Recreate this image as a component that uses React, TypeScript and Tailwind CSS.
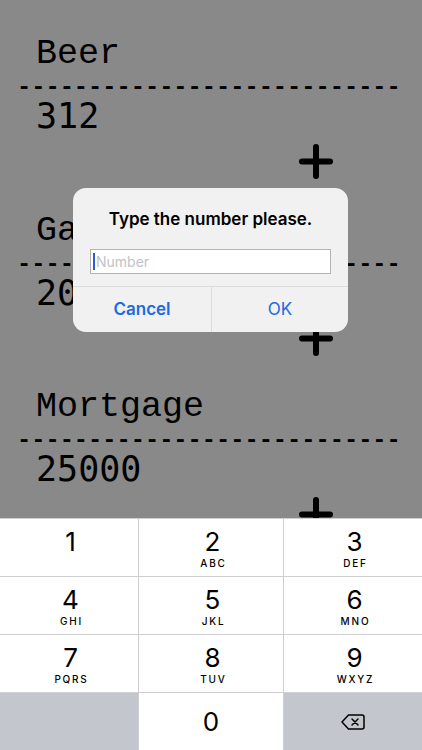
import React from 'react';

const ITEMS = [
  { name: 'Beer', amount: '312' },
  { name: 'Gas', amount: '200' },
  { name: 'Mortgage', amount: '25000' },
];

const KEYS = [
  { digit: '1', letters: '' },
  { digit: '2', letters: 'ABC' },
  { digit: '3', letters: 'DEF' },
  { digit: '4', letters: 'GHI' },
  { digit: '5', letters: 'JKL' },
  { digit: '6', letters: 'MNO' },
  { digit: '7', letters: 'PQRS' },
  { digit: '8', letters: 'TUV' },
  { digit: '9', letters: 'WXYZ' },
];

const PlusIcon = () => (
  <svg width="34" height="35" viewBox="0 0 34 35" fill="none">
    <line x1="17" y1="3" x2="17" y2="32" stroke="black" strokeWidth="6" strokeLinecap="round" />
    <line x1="3" y1="17.5" x2="31" y2="17.5" stroke="black" strokeWidth="6" strokeLinecap="round" />
  </svg>
);

const BackspaceIcon = () => (
  <svg width="24" height="16" viewBox="0 0 24 16" fill="none">
    <path
      d="M7.5 1h13.5a2 2 0 0 1 2 2v10a2 2 0 0 1-2 2H7.5L1 8z"
      stroke="black"
      strokeWidth="1.5"
      strokeLinejoin="round"
    />
    <path d="M11 5l6 6M17 5l-6 6" stroke="black" strokeWidth="1.5" strokeLinecap="round" />
  </svg>
);

const ExpenseItem: React.FC<{ name: string; amount: string }> = ({ name, amount }) => (
  <div className="flex flex-col h-[176.5px]">
    <div className="pl-[36px] h-[37px] pt-[1px] text-[35px] leading-[37px] font-['Liberation_Mono',monospace]">{name}</div>
    <div className="mt-[3.8px] pl-[17px] h-[23.7px] text-[23.7px] leading-none font-bold whitespace-nowrap font-['Liberation_Mono',monospace]">
      {'-'.repeat(27)}
    </div>
    <div className="-mt-[1.4px] pl-[36px] h-[36px] text-[35px] leading-[36px] font-['DejaVu_Sans_Mono',monospace]">{amount}</div>
    <div className="mt-[10px] flex justify-end pr-[89px]">
      <PlusIcon />
    </div>
  </div>
);

export default function App() {
  return (
    <div className="relative w-[422px] h-[750px] overflow-hidden bg-[#898989] text-black">
      <div className="flex flex-col pt-[35.4px]">
        {ITEMS.map((item) => (
          <ExpenseItem key={item.name} name={item.name} amount={item.amount} />
        ))}
      </div>

      {/* alert */}
      <div className="absolute left-[73px] top-[188px] w-[275px] h-[144px] rounded-[13px] bg-[#f1f1f1] flex flex-col font-['Inter',sans-serif] overflow-hidden">
        <div className="pt-[21px] h-[41px] text-center text-[17px] leading-[20px] font-semibold">
          Type the number please.
        </div>
        <div className="mt-[20px] mx-[17px] h-[25px] bg-white border border-[#b3b3b3] flex items-center pl-[2px]">
          <div className="w-[2px] h-[17px] bg-[#2a5be0]" />
          <span className="pl-[1px] text-[14px] text-[#c2c2c7]">Number</span>
        </div>
        <div className="mt-[12px] flex flex-1 border-t border-[#dcdcdc]">
          <div className="w-[139px] flex items-center justify-center text-[17px] font-semibold text-[#1d6ae0] border-r border-[#dcdcdc]">
            Cancel
          </div>
          <div className="flex-1 flex items-center justify-center text-[17px] text-[#1d6ae0]">OK</div>
        </div>
      </div>

      {/* keypad */}
      <div className="absolute left-0 bottom-0 w-[422px] pt-px bg-[#cfcfd2] grid grid-cols-[138px_144px_1fr] auto-rows-[57px] gap-px font-['Inter',sans-serif]">
        {KEYS.map((k) => (
          <div key={k.digit} className="bg-white flex flex-col items-center pt-[10px] pl-[3px]">
            <div className="text-[26px] leading-none h-[26px]">{k.digit}</div>
            <div className="mt-[3px] text-[10px] leading-none font-medium tracking-[1.8px] pl-[2px]">{k.letters}</div>
          </div>
        ))}
        <div className="bg-[#c3c7cd]" />
        <div className="bg-white flex items-center justify-center">
          <div className="text-[26px] leading-none">0</div>
        </div>
        <div className="bg-[#c3c7cd] flex items-center justify-center">
          <BackspaceIcon />
        </div>
      </div>
    </div>
  );
}
